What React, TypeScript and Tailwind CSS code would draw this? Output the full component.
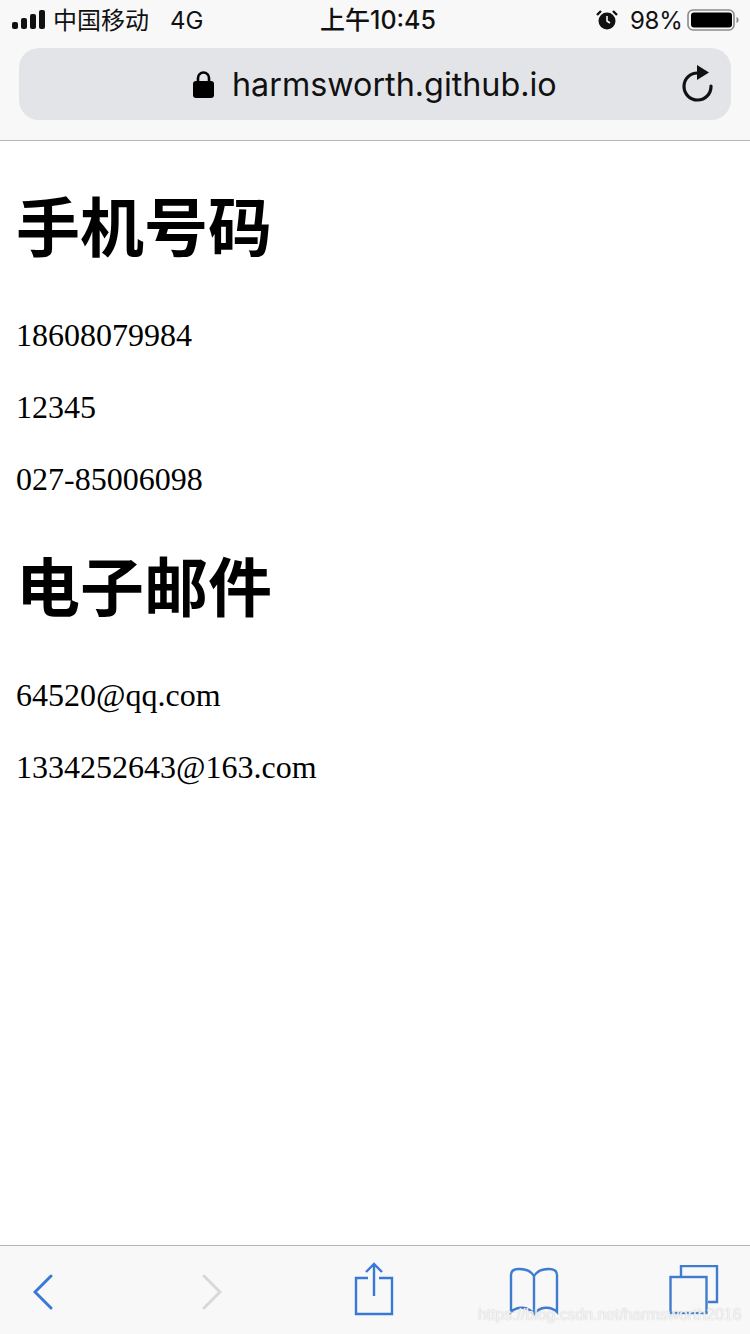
const SANS = 'font-["Inter","Noto_Sans_CJK_SC",sans-serif]';

function StatusBar() {
  return (
    <div className={`flex h-[40px] items-center pl-[12px] pr-[11px] pt-[2px] text-[24px] text-[#111] ${SANS}`}>
      <svg width="33" height="20" viewBox="0 0 33 20" className="-mt-[2px] shrink-0">
        <rect x="0" y="12" width="6" height="7" rx="2" fill="#111" />
        <rect x="9" y="8" width="6" height="11" rx="2" fill="#111" />
        <rect x="18" y="4" width="6" height="15" rx="2" fill="#111" />
        <rect x="27" y="0" width="6" height="19" rx="2" fill="#111" />
      </svg>
      <span className="ml-[8px] w-[96px] whitespace-nowrap">中国移动</span>
      <span className="ml-[21px] w-[33px] whitespace-nowrap">4G</span>
      <span className="ml-[117px] w-[116px] whitespace-nowrap text-[25px] font-medium">上午10:45</span>
      <svg width="22" height="22" viewBox="0 0 22 22" className="-mt-[2px] ml-[160px] shrink-0">
        <circle cx="11" cy="12" r="8.500" fill="#111" />
        <path d="M11 7v5l3 2" stroke="#f8f8f8" strokeWidth="1.6" fill="none" />
        <path d="M1 6l4-4M21 6l-4-4" stroke="#111" strokeWidth="2.4" />
      </svg>
      <span className="ml-[12px] w-[50px] whitespace-nowrap tracking-[-0.3px]">98%</span>
      <svg width="52" height="24" viewBox="0 0 52 24" className="-mt-[2px] ml-[7px] shrink-0">
        <rect x="1" y="2" width="46" height="20" rx="5" fill="none" stroke="#8a8a8a" strokeWidth="1.6" />
        <rect x="4" y="4.5" width="41" height="15" rx="3" fill="#000" />
        <path d="M49.5 9c1.5 .4 2 1.5 2 3s-.5 2.6-2 3z" fill="#8a8a8a" />
      </svg>
    </div>
  );
}

function UrlBar() {
  return (
    <div className="mx-[19px] mt-[8px] flex h-[72px] items-center rounded-[20px] bg-[#e3e4e8] pl-[174px]">
      <svg width="21" height="28" viewBox="0 0 21 28" className="shrink-0">
        <path d="M5 13V8a5.5 5.5 0 0 1 11 0v5" fill="none" stroke="#000" strokeWidth="2.6" />
        <rect x="0" y="11" width="21" height="17" rx="3" fill="#000" />
      </svg>
      <span className={`ml-[18px] mt-[2px] w-[325px] whitespace-nowrap text-[32.300px] text-[#111] ${SANS}`}>harmsworth.github.io</span>
      <svg width="32" height="38" viewBox="0 0 32 38" className="ml-[125px] shrink-0">
        <path d="M16 8A13.500 13.500 0 1 0 29 21" fill="none" stroke="#111" strokeWidth="3.2" strokeLinecap="round" />
        <path d="M15 0l12 7.500L15 15z" fill="#111" />
      </svg>
    </div>
  );
}

function Toolbar() {
  return (
    <div className="relative flex h-[89px] items-center border-t border-[#b4b4b4] bg-[#f8f8f8] pl-[33px]">
      <svg width="20" height="36" viewBox="0 0 20 36" className="mt-[4px] shrink-0">
        <path d="M18 2L2 18l16 16" fill="none" stroke="#3a78d8" strokeWidth="3" strokeLinecap="round" />
      </svg>
      <svg width="20" height="36" viewBox="0 0 20 36" className="ml-[149px] mt-[4px] shrink-0">
        <path d="M2 2l16 16L2 34" fill="none" stroke="#d8d8d8" strokeWidth="3" strokeLinecap="round" />
      </svg>
      <svg width="40" height="54" viewBox="0 0 40 54" className="-mt-[2px] ml-[132px] shrink-0">
        <path d="M14 16H2v36h36V16H25" fill="none" stroke="#3a78d8" strokeWidth="2.4" />
        <path d="M20 34V2M12 10l8-8 8 8" fill="none" stroke="#3a78d8" strokeWidth="2.4" />
      </svg>
      <svg width="50" height="50" viewBox="0 0 50 50" className="ml-[115px] mt-[4px] shrink-0">
        <path d="M25 9C22 4 16 2 10 2 5 2 2 4 2 8v37c6-6 17-6 23 2 6-8 17-8 23-2V8c0-4-3-6-8-6-6 0-12 2-15 7zM25 9v38" fill="none" stroke="#3f7ccf" strokeWidth="2.4" />
      </svg>
      <svg width="50" height="50" viewBox="0 0 50 50" className="ml-[110px] shrink-0">
        <path d="M12 11V1h36v36h-9" fill="none" stroke="#3f7ccf" strokeWidth="2.4" />
        <rect x="1.500" y="12" width="36" height="36" fill="none" stroke="#3f7ccf" strokeWidth="2.4" />
      </svg>
      <span className='absolute left-[478px] top-[59px] whitespace-nowrap font-["Liberation_Sans",sans-serif] text-[15.800px] leading-[20px] text-white/80 [text-shadow:0_0_1px_#b8b8b8]'>https://blog.csdn.net/harmsworth2016</span>
    </div>
  );
}

function Heading({ children }: { children: string }) {
  return <h1 className={`mb-[43px] mt-[45px] h-[88px] text-[64px] font-bold leading-[88px] text-black first:mt-[43px] ${SANS}`}>{children}</h1>;
}

function Line({ children }: { children: string }) {
  return <p className='my-[32px] font-["Liberation_Serif",serif] text-[32px] leading-[40px] text-black'>{children}</p>;
}

export default function App() {
  return (
    <div className="flex h-[1334px] w-[750px] flex-col overflow-hidden bg-white">
      <header className="h-[141px] shrink-0 border-b border-[#b4b4b4] bg-[#f8f8f8]">
        <StatusBar />
        <UrlBar />
      </header>
      <main className="flex-1 px-[16px]">
        <Heading>手机号码</Heading>
        <Line>18608079984</Line>
        <Line>12345</Line>
        <Line>027-85006098</Line>
        <Heading>电子邮件</Heading>
        <Line>64520@qq.com</Line>
        <Line>1334252643@163.com</Line>
      </main>
      <Toolbar />
    </div>
  );
}
